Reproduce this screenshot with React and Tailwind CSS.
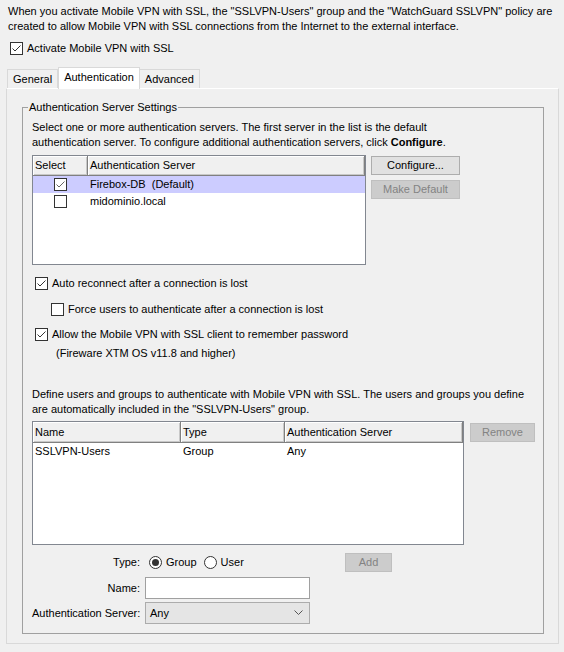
import React from 'react';

function Check({ checked = false, mark = '#333' }) {
  return (
    <span className="w-[13px] h-[13px] border border-[#333] bg-white flex items-center justify-center shrink-0">
      {checked && (
        <svg width="11" height="11" viewBox="0 0 11 11">
          <path d="M1.5 5.5 L4 8 L9.5 2.5" fill="none" stroke={mark} strokeWidth="1" />
        </svg>
      )}
    </span>
  );
}

function Radio({ selected = false }) {
  return (
    <span className="w-[13px] h-[13px] rounded-full border border-[#333] bg-white flex items-center justify-center shrink-0">
      {selected && <span className="w-[7px] h-[7px] rounded-full bg-[#333]" />}
    </span>
  );
}

function Btn({ children, disabled = false, className = '' }) {
  return (
    <div
      className={`flex items-center justify-center border ${
        disabled ? 'bg-[#cccccc] border-[#bfbfbf] text-[#838383]' : 'bg-[#e1e1e1] border-[#adadad] text-black'
      } ${className}`}
    >
      {children}
    </div>
  );
}

function HeadCell({ children, className = '' }) {
  return (
    <div
      className={`h-full flex items-center pl-[2px] bg-[#f0f0f0] border-r border-b border-[#808080] shadow-[inset_1px_1px_0_#fff,inset_-1px_-1px_0_#c8c8c8] ${className}`}
    >
      {children}
    </div>
  );
}

export default function App() {
  return (
    <div className="w-[564px] h-[652px] bg-[#f0f0f0] font-['Liberation_Sans',Arial,sans-serif] text-[11px] leading-[15px] text-black overflow-hidden">
      {/* intro text */}
      <div className="pt-[4px] pl-[8px]">
        <p>When you activate Mobile VPN with SSL, the "SSLVPN-Users" group and the "WatchGuard SSLVPN" policy are</p>
        <p>created to allow Mobile VPN with SSL connections from the Internet to the external interface.</p>
      </div>

      <div className="mt-[7px] pl-[10px] h-[15px] flex items-center gap-[4px]">
        <Check checked />
        <span>Activate Mobile VPN with SSL</span>
      </div>

      {/* tabs */}
      <div className="mt-[11px] pl-[7px] flex items-end h-[21px]">
        <div className="h-[19px] px-[5px] flex items-center border border-b-0 border-[#d9d9d9] bg-[#f0f0f0]">General</div>
        <div className="relative z-10 h-[22px] -mb-px px-[5px] pb-[3px] flex items-center border border-b-0 border-[#d9d9d9] bg-white">
          Authentication
        </div>
        <div className="h-[19px] px-[5px] flex items-center border border-b-0 border-l-0 border-[#d9d9d9] bg-[#f0f0f0]">Advanced</div>
      </div>

      {/* tab panel */}
      <div className="ml-[6px] w-[553px] h-[556px] border border-[#d9d9d9] border-t-white">
        <fieldset className="mt-[11px] ml-[15px] w-[522px] border border-[#a0a0a0] pl-[9px] pb-[9px]">
          <legend className="-ml-[4px] px-[1px]">Authentication Server Settings</legend>

          <div className="pt-[5px]">
            <p>Select one or more authentication servers. The first server in the list is the default</p>
            <p>
              authentication server. To configure additional authentication servers, click <b>Configure</b>.
            </p>
          </div>

          <div className="mt-[5px] flex items-start">
            <div className="w-[334px] h-[110px] border border-[#828790] bg-white flex flex-col">
              <div className="h-[20px] flex">
                <HeadCell className="w-[55px]">Select</HeadCell>
                <HeadCell className="flex-1">Authentication Server</HeadCell>
              </div>
              <div className="h-[17px] flex items-center bg-[#ccccff]">
                <div className="w-[55px] flex justify-center">
                  <Check checked mark="#666" />
                </div>
                <span className="pl-[2px] whitespace-pre">Firebox-DB  (Default)</span>
              </div>
              <div className="h-[17px] flex items-center">
                <div className="w-[55px] flex justify-center">
                  <Check />
                </div>
                <span className="pl-[2px]">midominio.local</span>
              </div>
            </div>
            <div className="ml-[5px] mt-px flex flex-col gap-[5px]">
              <Btn className="w-[89px] h-[19px]">Configure...</Btn>
              <Btn disabled className="w-[89px] h-[19px]">Make Default</Btn>
            </div>
          </div>

          <div className="mt-[11px] pl-[3px] h-[15px] flex items-center gap-[4px]">
            <Check checked />
            <span>Auto reconnect after a connection is lost</span>
          </div>
          <div className="mt-[11px] pl-[19px] h-[15px] flex items-center gap-[4px]">
            <Check />
            <span>Force users to authenticate after a connection is lost</span>
          </div>
          <div className="mt-[10px] pl-[3px] h-[15px] flex items-center gap-[4px]">
            <Check checked />
            <span>Allow the Mobile VPN with SSL client to remember password</span>
          </div>
          <div className="mt-[4px] pl-[24px]">(Fireware XTM OS v11.8 and higher)</div>

          <div className="mt-[26px]">
            <p>Define users and groups to authenticate with Mobile VPN with SSL. The users and groups you define</p>
            <p>are automatically included in the "SSLVPN-Users" group.</p>
          </div>

          <div className="mt-[4px] flex items-start">
            <div className="w-[432px] h-[124px] border border-[#828790] bg-white flex flex-col">
              <div className="h-[21px] flex">
                <HeadCell className="w-[148px]">Name</HeadCell>
                <HeadCell className="w-[104px]">Type</HeadCell>
                <HeadCell className="flex-1">Authentication Server</HeadCell>
              </div>
              <div className="h-[17px] flex items-center">
                <span className="w-[148px] pl-[2px]">SSLVPN-Users</span>
                <span className="w-[104px] pl-[2px]">Group</span>
                <span className="pl-[2px]">Any</span>
              </div>
            </div>
            <Btn disabled className="ml-[6px] mt-[2px] w-[65px] h-[19px]">Remove</Btn>
          </div>

          {/* add form */}
          <div className="mt-[7px] h-[21px] flex items-center">
            <span className="w-[108px] text-right">Type:</span>
            <div className="ml-[5px] w-[165px] flex items-center">
              <span className="ml-[4px]"><Radio selected /></span>
              <span className="ml-[4px]">Group</span>
              <span className="ml-[7px]"><Radio /></span>
              <span className="ml-[4px]">User</span>
            </div>
            <Btn disabled className="ml-[35px] w-[47px] h-[19px]">Add</Btn>
          </div>
          <div className="mt-[4px] h-[22px] flex items-center">
            <span className="w-[108px] text-right">Name:</span>
            <div className="ml-[5px] w-[165px] h-[22px] border border-[#a0a0a0] bg-white" />
          </div>
          <div className="mt-[3px] h-[22px] flex items-center">
            <span className="w-[108px] text-right whitespace-nowrap">Authentication Server:</span>
            <div className="ml-[5px] w-[165px] h-[22px] border border-[#acacac] bg-[#e5e5e5] flex items-center justify-between pl-[4px] pr-[6px]">
              <span>Any</span>
              <svg width="9" height="6" viewBox="0 0 9 6">
                <path d="M0.5 0.5 L4.5 4.5 L8.5 0.5" fill="none" stroke="#555" strokeWidth="1" />
              </svg>
            </div>
          </div>
        </fieldset>
      </div>
    </div>
  );
}
